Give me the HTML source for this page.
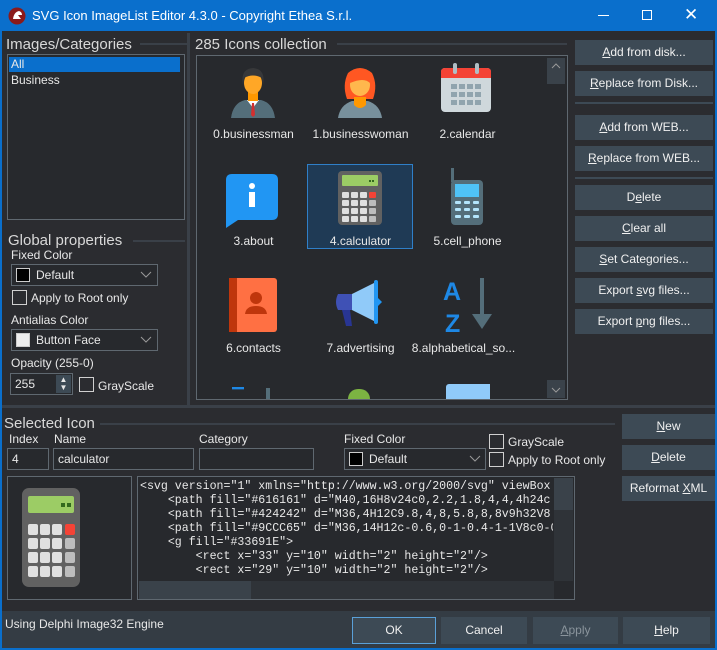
<!DOCTYPE html>
<html><head><meta charset="utf-8"><style>
*{box-sizing:border-box;margin:0;padding:0}
body{width:717px;height:650px;background:#2b2c30;font-family:"Liberation Sans",sans-serif;font-size:12px;color:#e8e8e8;position:relative;overflow:hidden}
.a{position:absolute}
.t{position:absolute;white-space:nowrap}
.btn{position:absolute;background:#3d4a55;color:#f0f0f0;text-align:center;font-size:12px;line-height:25px;height:25px}
.box{position:absolute;background:#27292d;border:1px solid #5f6870}
.inp{position:absolute;background:#27292d;border:1px solid #5f6870;height:22px;line-height:20px;padding-left:4px}
.cb{position:absolute;width:15px;height:15px;border:1px solid #d0d0d0}
.hdr{position:absolute;font-size:15px;color:#d8d8d8;white-space:nowrap}
.line{position:absolute;height:2px;background:#3a4048}
.lbl{position:absolute;width:107px;text-align:center;font-size:12px}
.sw{display:inline-block;width:14px;height:14px;vertical-align:-3px;margin-right:6px;border:1px solid #ccc}
.chev{position:absolute}
u{text-decoration:underline}
</style></head><body>
<!-- title bar -->
<div class="a" style="left:0;top:0;width:717px;height:31px;background:#0a6fcc"></div>
<div class="a" style="left:0;top:31px;width:2px;height:619px;background:#0a6fcc"></div>
<div class="a" style="left:715px;top:31px;width:2px;height:619px;background:#0a6fcc"></div>
<div class="a" style="left:0;top:648px;width:717px;height:2px;background:#0a6fcc"></div>
<svg class="a" style="left:8px;top:7px" width="18" height="18"><circle cx="9" cy="9" r="8.5" fill="#8b1a1a"/><path d="M5 12 Q6 5 11 4 Q14 5 14 8 L10 8 L13 12 Z" fill="#fff"/></svg>
<div class="t" style="left:32px;top:8px;font-size:13px;color:#fff">SVG Icon ImageList Editor 4.3.0 - Copyright Ethea S.r.l.</div>
<div class="a" style="left:598px;top:15px;width:11px;height:1px;background:#fff"></div>
<div class="a" style="left:642px;top:10px;width:10px;height:10px;border:1px solid #fff"></div>
<div class="t" style="left:684px;top:5px;font-size:17px;color:#fff">✕</div>

<!-- left panel -->
<div class="hdr" style="left:6px;top:36px">Images/Categories</div>
<div class="line" style="left:140px;top:43px;width:47px"></div>
<div class="box" style="left:7px;top:54px;width:178px;height:166px"></div>
<div class="a" style="left:9px;top:57px;width:171px;height:15px;background:#0a6fcc"></div>
<div class="t" style="left:11px;top:57px">All</div>
<div class="t" style="left:11px;top:73px">Business</div>
<div class="line" style="left:187px;top:33px;width:3px;height:373px"></div>

<div class="hdr" style="left:8px;top:232px">Global properties</div>
<div class="line" style="left:133px;top:240px;width:52px"></div>
<div class="t" style="left:11px;top:248px">Fixed Color</div>
<div class="inp" style="left:11px;top:264px;width:147px"><span class="sw" style="background:#000"></span>Default</div>
<svg class="chev" style="left:140px;top:271px" width="12" height="7"><path d="M1 1 L6 6 L11 1" stroke="#999" fill="none"/></svg>
<div class="cb" style="left:12px;top:290px"></div>
<div class="t" style="left:31px;top:291px">Apply to Root only</div>
<div class="t" style="left:11px;top:313px">Antialias Color</div>
<div class="inp" style="left:11px;top:329px;width:147px"><span class="sw" style="background:#eee"></span>Button Face</div>
<svg class="chev" style="left:140px;top:336px" width="12" height="7"><path d="M1 1 L6 6 L11 1" stroke="#999" fill="none"/></svg>
<div class="t" style="left:11px;top:356px">Opacity (255-0)</div>
<div class="inp" style="left:10px;top:373px;width:63px">255</div>
<div class="a" style="left:56px;top:375px;width:15px;height:18px;background:#3d4a55;font-size:8px;line-height:8px;text-align:center;padding-top:1px">▲<br>▼</div>
<div class="cb" style="left:79px;top:377px"></div>
<div class="t" style="left:98px;top:379px">GrayScale</div>

<!-- center -->
<div class="hdr" style="left:195px;top:36px">285 Icons collection</div>
<div class="line" style="left:337px;top:43px;width:230px"></div>
<div class="box" style="left:196px;top:55px;width:372px;height:345px"></div>
<div class="a" style="left:547px;top:58px;width:18px;height:26px;background:#3a424a"></div>
<svg class="chev" style="left:551px;top:63px" width="10" height="6"><path d="M1 5 L5 1 L9 5" stroke="#999" fill="none"/></svg>
<div class="a" style="left:547px;top:380px;width:18px;height:18px;background:#3a424a"></div>
<svg class="chev" style="left:551px;top:387px" width="10" height="6"><path d="M1 1 L5 5 L9 1" stroke="#999" fill="none"/></svg>
<div class="a" style="left:307px;top:164px;width:106px;height:85px;background:#1f3a55;border:1px solid #2f7fc8"></div>

<!-- icons -->
<svg class="a" style="left:229px;top:63px" width="48" height="56"><path d="M2 55 Q4 40 16 37 L32 37 Q44 40 46 55Z" fill="#546e7a"/><path d="M18 37 L24 45 L30 37Z" fill="#fff"/><path d="M23 40 L25 40 L26 52 L24 54 L22 52Z" fill="#d32f2f"/><rect x="19" y="29" width="10" height="9" fill="#ff9800"/><ellipse cx="24" cy="20" rx="9" ry="11" fill="#ffa726"/><path d="M14 22 Q11 6 24 5 Q37 6 34 22 L33 15 Q24 10 15 15Z" fill="#37383a"/></svg>
<svg class="a" style="left:336px;top:63px" width="48" height="56"><path d="M11 36 Q6 22 12 10 Q24 0 36 10 Q42 22 37 36Z" fill="#ff5722"/><path d="M2 55 Q4 42 16 38 L32 38 Q44 42 46 55Z" fill="#78909c"/><path d="M18 34 L30 34 L30 42 Q24 48 18 42Z" fill="#ff9800"/><ellipse cx="24" cy="22" rx="10" ry="11" fill="#ffb74d"/><path d="M14 20 Q16 10 24 10 Q32 10 34 20 Q28 14 14 20Z" fill="#ff5722"/></svg>
<svg class="a" style="left:440px;top:62px" width="54" height="54"><rect x="1" y="6" width="50" height="44" rx="4" fill="#cfd8dc"/><path d="M1 10 Q1 6 5 6 L47 6 Q51 6 51 10 L51 16 L1 16Z" fill="#f44336"/><rect x="13" y="1" width="4" height="11" rx="2" fill="#b0bec5"/><rect x="35" y="1" width="4" height="11" rx="2" fill="#b0bec5"/><g fill="#90a4ae"><rect x="11" y="22" width="6" height="5"/><rect x="19" y="22" width="6" height="5"/><rect x="27" y="22" width="6" height="5"/><rect x="35" y="22" width="6" height="5"/><rect x="11" y="30" width="6" height="5"/><rect x="19" y="30" width="6" height="5"/><rect x="27" y="30" width="6" height="5"/><rect x="35" y="30" width="6" height="5"/><rect x="11" y="38" width="6" height="5"/><rect x="19" y="38" width="6" height="5"/><rect x="27" y="38" width="6" height="5"/><rect x="35" y="38" width="6" height="5"/></g></svg>
<div class="lbl" style="left:200px;top:127px">0.businessman</div>
<div class="lbl" style="left:307px;top:127px">1.businesswoman</div>
<div class="lbl" style="left:414px;top:127px">2.calendar</div>

<svg class="a" style="left:226px;top:174px" width="54" height="54"><path d="M6 0 L46 0 Q52 0 52 6 L52 40 Q52 46 46 46 L12 46 L0 54 L0 6 Q0 0 6 0Z" fill="#2196f3"/><circle cx="26" cy="12" r="3" fill="#fff"/><rect x="23" y="18" width="6" height="15" fill="#fff"/></svg>
<svg class="a" style="left:338px;top:171px" width="46" height="56"><rect x="0" y="0" width="44" height="54" rx="4" fill="#616161"/><rect x="4" y="4" width="36" height="11" rx="1" fill="#9ccc65"/><rect x="31" y="9" width="2" height="2" fill="#33691e"/><rect x="34" y="9" width="2" height="2" fill="#33691e"/><g fill="#e0e0e0"><rect x="4" y="21" width="7" height="6" rx="1"/><rect x="13" y="21" width="7" height="6" rx="1"/><rect x="22" y="21" width="7" height="6" rx="1"/><rect x="4" y="29" width="7" height="6" rx="1"/><rect x="13" y="29" width="7" height="6" rx="1"/><rect x="22" y="29" width="7" height="6" rx="1"/><rect x="4" y="37" width="7" height="6" rx="1"/><rect x="13" y="37" width="7" height="6" rx="1"/><rect x="22" y="37" width="7" height="6" rx="1"/><rect x="4" y="45" width="7" height="6" rx="1"/><rect x="13" y="45" width="7" height="6" rx="1"/><rect x="22" y="45" width="7" height="6" rx="1"/></g><rect x="31" y="21" width="7" height="6" rx="1" fill="#f44336"/><g fill="#bdbdbd"><rect x="31" y="29" width="7" height="6" rx="1"/><rect x="31" y="37" width="7" height="6" rx="1"/><rect x="31" y="45" width="7" height="6" rx="1"/></g></svg>
<svg class="a" style="left:450px;top:168px" width="34" height="60"><rect x="1" y="0" width="3" height="14" fill="#546e7a"/><rect x="1" y="12" width="32" height="45" rx="4" fill="#546e7a"/><rect x="5" y="16" width="24" height="13" fill="#4fc3f7"/><g fill="#b3e5fc"><rect x="5" y="33" width="6" height="3" rx="1"/><rect x="14" y="33" width="6" height="3" rx="1"/><rect x="23" y="33" width="6" height="3" rx="1"/><rect x="5" y="40" width="6" height="3" rx="1"/><rect x="14" y="40" width="6" height="3" rx="1"/><rect x="23" y="40" width="6" height="3" rx="1"/><rect x="5" y="47" width="6" height="3" rx="1"/><rect x="14" y="47" width="6" height="3" rx="1"/><rect x="23" y="47" width="6" height="3" rx="1"/></g></svg>
<div class="lbl" style="left:200px;top:234px">3.about</div>
<div class="lbl" style="left:307px;top:234px">4.calculator</div>
<div class="lbl" style="left:414px;top:234px">5.cell_phone</div>

<svg class="a" style="left:229px;top:278px" width="48" height="54"><rect x="0" y="0" width="48" height="54" rx="3" fill="#ff7043"/><rect x="0" y="0" width="8" height="54" fill="#bf360c"/><circle cx="27" cy="20" r="6" fill="#bf360c"/><path d="M16 36 Q17 28 27 28 Q37 28 38 36Z" fill="#bf360c"/></svg>
<svg class="a" style="left:332px;top:280px" width="56" height="52"><path d="M20 14 L44 2 L44 42 L20 30Z" fill="#90caf9"/><rect x="42" y="0" width="4" height="44" rx="2" fill="#2196f3"/><path d="M6 14 L20 14 L20 30 L6 30 Q2 22 6 14Z" fill="#3f51b5"/><path d="M10 30 L18 30 L20 46 L14 46Z" fill="#283593"/><path d="M46 18 L50 22 L46 26Z" fill="#2196f3"/></svg>
<svg class="a" style="left:443px;top:278px" width="54" height="56"><text x="0" y="22" font-family="Liberation Sans" font-weight="bold" font-size="25" fill="#1e88e5">A</text><text x="2" y="54" font-family="Liberation Sans" font-weight="bold" font-size="25" fill="#1e88e5">Z</text><rect x="37" y="0" width="4" height="40" fill="#546e7a"/><path d="M29 36 L49 36 L39 51Z" fill="#546e7a"/></svg>
<div class="lbl" style="left:200px;top:341px">6.contacts</div>
<div class="lbl" style="left:307px;top:341px">7.advertising</div>
<div class="lbl" style="left:410px;top:341px">8.alphabetical_so...</div>
<div class="a" style="left:232px;top:387px;width:12px;height:12px;background:#1e88e5;clip-path:polygon(0 0,100% 0,100% 20%,0 20%)"></div>
<div class="a" style="left:266px;top:388px;width:4px;height:11px;background:#546e7a"></div>
<div class="a" style="left:348px;top:389px;width:22px;height:10px;background:#7cb342;border-radius:11px 11px 0 0"></div>
<div class="a" style="left:446px;top:384px;width:44px;height:15px;background:#90caf9;border-radius:3px 0 0 0"></div>

<!-- right buttons -->
<div class="btn" style="left:575px;top:40px;width:138px"><u>A</u>dd from disk...</div>
<div class="btn" style="left:575px;top:71px;width:138px"><u>R</u>eplace from Disk...</div>
<div class="a" style="left:575px;top:102px;width:138px;height:2px;background:#3d4a55"></div>
<div class="btn" style="left:575px;top:115px;width:138px"><u>A</u>dd from WEB...</div>
<div class="btn" style="left:575px;top:146px;width:138px"><u>R</u>eplace from WEB...</div>
<div class="a" style="left:575px;top:177px;width:138px;height:2px;background:#3d4a55"></div>
<div class="btn" style="left:575px;top:185px;width:138px">D<u>e</u>lete</div>
<div class="btn" style="left:575px;top:216px;width:138px"><u>C</u>lear all</div>
<div class="btn" style="left:575px;top:247px;width:138px"><u>S</u>et Categories...</div>
<div class="btn" style="left:575px;top:278px;width:138px">Export <u>s</u>vg files...</div>
<div class="btn" style="left:575px;top:309px;width:138px">Export <u>p</u>ng files...</div>

<div class="a" style="left:2px;top:405px;width:713px;height:3px;background:#3a4048"></div>

<!-- selected icon -->
<div class="hdr" style="left:4px;top:415px">Selected Icon</div>
<div class="line" style="left:100px;top:423px;width:515px"></div>
<div class="t" style="left:9px;top:432px">Index</div>
<div class="t" style="left:54px;top:432px">Name</div>
<div class="t" style="left:199px;top:432px">Category</div>
<div class="t" style="left:344px;top:432px">Fixed Color</div>
<div class="inp" style="left:7px;top:448px;width:42px">4</div>
<div class="inp" style="left:53px;top:448px;width:141px">calculator</div>
<div class="inp" style="left:199px;top:448px;width:115px"></div>
<div class="inp" style="left:344px;top:448px;width:142px"><span class="sw" style="background:#000"></span>Default</div>
<svg class="chev" style="left:469px;top:455px" width="12" height="7"><path d="M1 1 L6 6 L11 1" stroke="#999" fill="none"/></svg>
<div class="cb" style="left:489px;top:434px"></div>
<div class="t" style="left:508px;top:435px">GrayScale</div>
<div class="cb" style="left:489px;top:452px"></div>
<div class="t" style="left:508px;top:453px">Apply to Root only</div>
<div class="btn" style="left:622px;top:414px;width:93px"><u>N</u>ew</div>
<div class="btn" style="left:622px;top:445px;width:93px"><u>D</u>elete</div>
<div class="btn" style="left:622px;top:476px;width:93px">Reformat <u>X</u>ML</div>

<div class="box" style="left:7px;top:476px;width:125px;height:124px"></div>
<svg class="a" style="left:22px;top:488px" width="60" height="100"><rect x="0" y="0" width="58" height="99" rx="7" fill="#616161"/><rect x="6" y="8" width="46" height="17" rx="2" fill="#9ccc65"/><rect x="39" y="15" width="4" height="4" fill="#33691e"/><rect x="45" y="15" width="4" height="4" fill="#33691e"/><g fill="#e0e0e0"><rect x="6" y="36" width="10" height="11" rx="2"/><rect x="18" y="36" width="10" height="11" rx="2"/><rect x="30" y="36" width="10" height="11" rx="2"/><rect x="6" y="50" width="10" height="11" rx="2"/><rect x="18" y="50" width="10" height="11" rx="2"/><rect x="30" y="50" width="10" height="11" rx="2"/><rect x="6" y="64" width="10" height="11" rx="2"/><rect x="18" y="64" width="10" height="11" rx="2"/><rect x="30" y="64" width="10" height="11" rx="2"/><rect x="6" y="78" width="10" height="11" rx="2"/><rect x="18" y="78" width="10" height="11" rx="2"/><rect x="30" y="78" width="10" height="11" rx="2"/></g><rect x="43" y="36" width="10" height="11" rx="2" fill="#f44336"/><g fill="#bdbdbd"><rect x="43" y="50" width="10" height="11" rx="2"/><rect x="43" y="64" width="10" height="11" rx="2"/><rect x="43" y="78" width="10" height="11" rx="2"/></g></svg>

<div class="box" style="left:137px;top:476px;width:438px;height:124px;overflow:hidden"></div>
<pre class="a" style="left:140px;top:480px;width:413px;height:100px;overflow:hidden;font-family:'Liberation Mono',monospace;font-size:11.6px;line-height:14px;color:#e8e8e8">&lt;svg version="1" xmlns="http://www.w3.org/2000/svg" viewBox
    &lt;path fill="#616161" d="M40,16H8v24c0,2.2,1.8,4,4,4h24c
    &lt;path fill="#424242" d="M36,4H12C9.8,4,8,5.8,8,8v9h32V8
    &lt;path fill="#9CCC65" d="M36,14H12c-0.6,0-1-0.4-1-1V8c0-0
    &lt;g fill="#33691E"&gt;
        &lt;rect x="33" y="10" width="2" height="2"/&gt;
        &lt;rect x="29" y="10" width="2" height="2"/&gt;</pre>
<div class="a" style="left:554px;top:478px;width:19px;height:103px;background:#2f3338"></div>
<div class="a" style="left:554px;top:478px;width:19px;height:32px;background:#3a424a"></div>
<div class="a" style="left:139px;top:581px;width:415px;height:18px;background:#2f3338"></div>
<div class="a" style="left:139px;top:581px;width:112px;height:18px;background:#3a424a"></div>

<!-- status -->
<div class="a" style="left:2px;top:611px;width:713px;height:37px;background:#343c44"></div>
<div class="t" style="left:5px;top:617px">Using Delphi Image32 Engine</div>
<div class="btn" style="left:352px;top:617px;width:84px;height:27px;line-height:25px;border:1px solid #5aa0d8">OK</div>
<div class="btn" style="left:441px;top:617px;width:86px;height:27px;line-height:27px">Cancel</div>
<div class="btn" style="left:533px;top:617px;width:85px;height:27px;line-height:27px;color:#8a949c"><u>A</u>pply</div>
<div class="btn" style="left:623px;top:617px;width:87px;height:27px;line-height:27px"><u>H</u>elp</div>
</body></html>
